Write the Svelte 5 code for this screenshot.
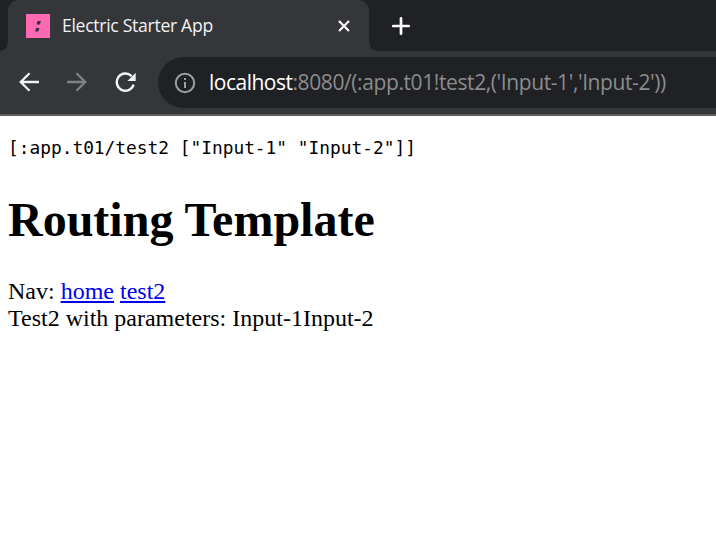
<script>
  const params = ['Input-1', 'Input-2'];
  const route = '[:app.t01/test2 ["Input-1" "Input-2"]]';
</script>

<div class="browser">
  <div class="tabs">
    <svg class="foot" width="8" height="51" viewBox="0 0 8 51"><path d="M8 40v11H0Q8 51 8 40Z" fill="#35363a" /></svg>
    <div class="tab">
      <svg class="favicon" width="24" height="24" viewBox="0 0 24 24">
        <path fill="#ff69b4" d="M0 0h24v24H0z" />
        <path fill="#35363a" d="M11.4 7h3.4l-.8 3.5h-3.4zM10 14.1h3.4l-1 3.4H9z" />
      </svg>
      <span class="title">Electric Starter App</span>
      <svg class="close" width="14" height="14" viewBox="0 0 14 14"><path d="M2 2l10 10M12 2L2 12" stroke="#fff" stroke-width="2.2" /></svg>
    </div>
    <svg class="foot" width="10" height="51" viewBox="0 0 10 51"><path d="M0 40v11H10Q0 51 0 40Z" fill="#35363a" /></svg>
    <svg class="plus" width="18" height="18" viewBox="0 0 18 18"><path d="M9 1.3v15.4M1.3 9h15.4" stroke="#fff" stroke-width="2.7" stroke-linecap="round" /></svg>
  </div>
  <div class="toolbar">
    <svg class="back" width="20" height="20" viewBox="0 0 20 20" fill="none" stroke="#f1f3f4" stroke-width="2.3"><path d="M20 10H1.8M10.5 1.2L1.7 10l8.8 8.8" /></svg>
    <svg class="forward" width="20" height="20" viewBox="0 0 20 20" fill="none" stroke="#818285" stroke-width="2.3"><path d="M0 10h18.2M9.5 1.2l8.8 8.8-8.8 8.8" /></svg>
    <svg class="reload" width="22" height="20" viewBox="0 0 22 20"><path d="M18.6 12.7A8.6 8.6 0 1 1 16.6 4.2" fill="none" stroke="#f1f3f4" stroke-width="2.4" /><path d="M20.7.7V9h-8.3z" fill="#f1f3f4" /></svg>
    <div class="address">
      <svg class="info" width="22" height="22" viewBox="0 0 22 22"><circle cx="11" cy="11" r="9.2" fill="none" stroke="#9aa0a6" stroke-width="2" /><path d="M10 10h2v6h-2zM10 6h2v2h-2z" fill="#9aa0a6" /></svg>
      <span class="host">localhost</span><span class="path">:8080/(:app.t01!test2,('Input-1','Input-2'))</span>
    </div>
  </div>
</div>
<main>
  <pre>{route}</pre>
  <h1>Routing Template</h1>
  <div class="nav">Nav: <a href="#home">home</a> <a href="#test2">test2</a></div>
  <div>Test2 with parameters: {params.join('')}</div>
</main>

<style>
  :global(body) { background: #fff; overflow: hidden; }
  svg { display: block; flex: none; }
  .browser { height: 116px; box-sizing: border-box; background: #35363a; border-bottom: 2px solid #5d5d60; font-family: "Open Sans", "Noto Sans", sans-serif; }
  .tabs { display: flex; height: 51px; background: #202124; }
  .tab { display: flex; align-items: center; box-sizing: border-box; width: 361px; height: 51px; padding: 1px 18px 0; background: #35363a; border-radius: 11px 11px 0 0; }
  .title { margin: 0 0 2px 12px; font-size: 17.6px; letter-spacing: -0.3px; line-height: 24px; color: #f1f3f4; white-space: nowrap; }
  .close { margin-left: auto; }
  .plus { margin: 17px 0 0 13px; }
  .toolbar { display: flex; align-items: center; height: 63px; padding-left: 19px; }
  .back { margin-bottom: 1px; }
  .forward { margin: 0 0 1px 28px; }
  .reload { margin: 0 0 1px 28px; }
  .address { display: flex; align-items: center; flex: 1; height: 51px; box-sizing: border-box; margin-left: 21px; padding-left: 16px; border-radius: 26px 0 0 26px; background: #202124; font-size: 21px; line-height: 28px; white-space: nowrap; }
  .info { margin-top: 1px; }
  .host, .path { padding-bottom: 1px; }
  .host { margin-left: 13px; color: #fff; letter-spacing: -0.5px; }
  .path { color: #8b8c8d; letter-spacing: -0.4px; }
  main { padding: 20px 8px 0; color: #000; font: 24px/27px "Liberation Serif", "Times New Roman", serif; }
  pre { margin: 0; font: 17.83px/23px "DejaVu Sans Mono", monospace; }
  h1 { margin: 33px 0 31px; font-size: 48px; line-height: 55px; font-weight: bold; }
  a { color: #0000ee; text-decoration: underline; }
</style>
